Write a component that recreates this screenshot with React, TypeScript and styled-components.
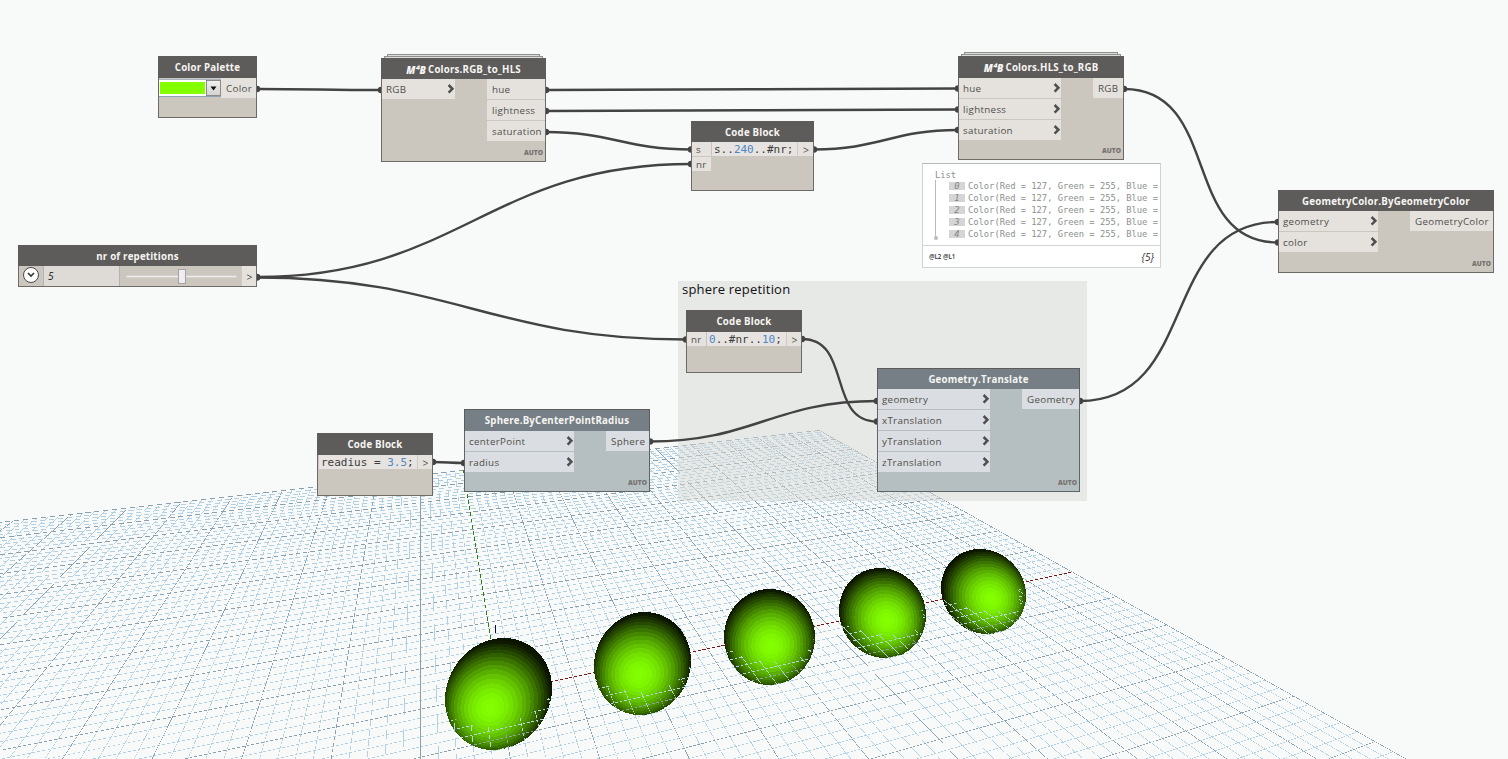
import React from "react";
import styled, { createGlobalStyle, css } from "styled-components";

const GlobalStyle = createGlobalStyle`
  * { box-sizing: border-box; }
  html, body { margin: 0; padding: 0; background: #f8faf9; }
  body { overflow: hidden; }
`;

/* ---------- 3D background geometry ---------- */

const W = 1508;
const H = 759;
const HORIZON = 207;
const ORIGIN = { x: 499.5, y: 692.55 };
const VX = 2806;
const VY = 420.5;
const KA = 0.03303;
const KB = 0.0844;
const LINE = 0.57;
const NEAR = 0.62;

type Pt = [number, number];
type Seg = [Pt, Pt];
type Bounds = { x0: number; x1: number; y0: number; y1: number };

const SCREEN: Bounds = { x0: 0, x1: W, y0: 0, y1: H };

/** Projects a ground plane point, in major grid cells, to the screen. */
function project(u: number, v: number): Pt {
  const w = 1 + KA * u + KB * v;
  return [
    (ORIGIN.x + KA * u * VX + KB * v * VY) / w,
    HORIZON + (ORIGIN.y - HORIZON) / w,
  ];
}

const f = (n: number) => n.toFixed(2);

/**
 * Thin lines drawn without smoothing: a pixel is set only when its centre
 * falls inside the line, so each line breaks up into short pixel runs.
 */
function runs([a, b]: Seg, width: number, box: Bounds): string {
  const dx = b[0] - a[0];
  const dy = b[1] - a[1];
  const flat = Math.abs(dx) >= Math.abs(dy);
  const len = Math.hypot(dx, dy);
  const half = (width * len) / (flat ? Math.abs(dx) : Math.abs(dy)) / 2;
  const m = flat ? 0 : 1;
  const o = 1 - m;
  const slope = (b[o] - a[o]) / (b[m] - a[m]);
  const lowM = flat ? box.x0 : box.y0;
  const highM = flat ? box.x1 : box.y1;
  const lowO = flat ? box.y0 : box.x0;
  const highO = flat ? box.y1 : box.x1;
  const start = Math.max(lowM, Math.round(Math.min(a[m], b[m])));
  const end = Math.min(highM, Math.round(Math.max(a[m], b[m])));
  let d = "";
  let from = -1;
  let row = 0;
  const flush = (to: number) => {
    if (from < 0) return;
    d += flat ? `M${from} ${row}.5h${to - from}` : `M${row}.5 ${from}v${to - from}`;
    from = -1;
  };
  for (let i = start; i < end; i++) {
    const c = a[o] + slope * (i + 0.5 - a[m]);
    const j = Math.floor(c);
    const on = Math.abs(j + 0.5 - c) <= half && j >= lowO && j < highO;
    if (!on) flush(i);
    else if (from < 0) {
      from = i;
      row = j;
    } else if (j !== row) {
      flush(i);
      from = i;
      row = j;
    }
  }
  flush(end);
  return d;
}

function gridSegments(major: boolean): Seg[] {
  const list: Seg[] = [];
  for (let i = -50; i <= 50; i++) {
    if ((i % 5 === 0) !== major) continue;
    const k = i / 5;
    const vMin = Math.max(-10, (NEAR - 1 - KA * k) / KB);
    list.push([project(k, vMin), project(k, k === 0 ? 0 : 10)]);
    const uMin = Math.max(-10, (NEAR - 1 - KB * k) / KA);
    if (uMin < 10) list.push([project(uMin, k), project(k === 0 ? 0 : 10, k)]);
  }
  return list;
}

const MINOR_SEGS = gridSegments(false);
const MAJOR_SEGS = gridSegments(true);
const raster = (segs: Seg[], box: Bounds, width = LINE) => segs.map((s) => runs(s, width, box)).join("");

const MINOR = raster(MINOR_SEGS, SCREEN);
const MAJOR = raster(MAJOR_SEGS, SCREEN);
const AXIS_Y = raster([[project(0, 0), project(0, 10)]], SCREEN, 0.62);
const AXIS_X = raster([[project(0, 0), project(10, 0)]], SCREEN, 0.62);

type Sphere = Bounds & { u: number; top: number; lx: number; ly: number };

const SPHERES: Sphere[] = [
  { u: 0, x0: 445, x1: 552, y0: 638, y1: 750, top: 5.5, lx: 490, ly: 708 },
  { u: 2, x0: 594, x1: 691, y0: 612, y1: 715, top: 2.5, lx: 639, ly: 675 },
  { u: 4, x0: 724, x1: 815, y0: 589, y1: 685, top: 0, lx: 771, ly: 646 },
  { u: 6, x0: 839, x1: 926, y0: 568, y1: 658, top: -2.5, lx: 887, ly: 621 },
  { u: 8, x0: 941, x1: 1026, y0: 549, y1: 634, top: -4, lx: 991, ly: 599 },
];

const BANDS = 19;
const CAP = 0.935;

const shade = (t: number) => `rgb(${Math.round(130 * t)},${Math.round(255 * t)},0)`;

function sphereShape(s: Sphere) {
  const cx = (s.x0 + s.x1) / 2;
  const cy = (s.y0 + s.y1) / 2;
  const A = (s.x1 - s.x0) / 2;
  const B = (s.y1 - s.y0) / 2;
  const m = (-s.top * B) / A;
  const D = Math.sqrt(B * B - m * m);
  const toScreen = (x: number, y: number): Pt => [cx + A * x, cy + m * x + D * y];
  const px = (s.lx - cx) / A;
  const py = (s.ly - cy - m * px) / D;
  const depth = (x: number, y: number) => Math.sqrt(Math.max(0, 1 - CAP * CAP * (x * x + y * y)));
  const pz = depth(px, py);
  const lit = (x: number, y: number) => CAP * CAP * (px * x + py * y) + pz * depth(x, y);
  const ring = (level: number) => {
    let d = "";
    for (let i = 0; i < 80; i++) {
      const a = (i / 80) * Math.PI * 2;
      const dx = Math.cos(a);
      const dy = Math.sin(a);
      const b = px * dx + py * dy;
      const edge = -b + Math.sqrt(b * b + 1 - px * px - py * py);
      let lo = 0;
      let hi = edge;
      if (lit(px + dx * edge, py + dy * edge) < level) {
        for (let k = 0; k < 18; k++) {
          const mid = (lo + hi) / 2;
          if (lit(px + dx * mid, py + dy * mid) >= level) lo = mid;
          else hi = mid;
        }
      }
      const p = toScreen(px + dx * hi, py + dy * hi);
      d += `${i ? "L" : "M"}${f(p[0])} ${f(p[1])}`;
    }
    return d + "Z";
  };
  const bands = [{ d: ring(-2), fill: "#0a1500" }];
  for (let i = 1; i < BANDS; i++) {
    const outer = Math.cos((Math.PI / 2) * (1 - i / BANDS));
    const inner = Math.cos((Math.PI / 2) * (1 - (i + 0.7) / BANDS));
    bands.push({ d: ring(outer), fill: shade(Math.max(0.08, Math.min(1, inner) ** 1.9)) });
  }
  /* Area of the ball below the ground plane, seen through the near edge of the cut. */
  let below = "";
  for (let i = 0; i <= 32; i++) {
    const a = Math.PI + (i / 32) * Math.PI;
    const p = project(s.u + 0.7 * Math.cos(a), 0.7 * Math.sin(a));
    if (i === 0) below += `M${f(p[0] - 4)} ${f(p[1])}`;
    below += `L${f(p[0])} ${f(p[1])}`;
    if (i === 32) below += `L${f(p[0] + 4)} ${f(p[1])}V${H}H${s.x0 - 4}Z`;
  }
  return {
    bands,
    outline: bands[0].d,
    below,
    minor: raster(MINOR_SEGS, s),
    major: raster(MAJOR_SEGS, s),
  };
}

const SHAPES = SPHERES.map(sphereShape);

const WIRES: [number, number, number, number][] = [
  [257, 89, 381, 90],
  [546, 90, 958, 88.5],
  [546, 111, 958, 109.5],
  [546, 132, 691, 149.5],
  [814, 149.5, 958, 130],
  [257, 277, 691, 164],
  [257, 277.5, 686, 339.5],
  [802, 339, 877, 421.5],
  [650, 441.5, 877, 401],
  [433, 462, 464, 463],
  [1080, 401, 1278, 222],
  [1124, 89, 1278, 242.5],
];

function wirePath([x1, y1, x2, y2]: [number, number, number, number]) {
  const off = 0.45 * Math.hypot(x2 - x1, y2 - y1);
  return `M${x1} ${y1}C${x1 + off} ${y1} ${x2 - off} ${y2} ${x2} ${y2}`;
}

/* ---------- styled parts ---------- */

const Workspace = styled.main`
  position: relative;
  width: ${W}px;
  height: ${H}px;
  overflow: hidden;
  background: #f8faf9;
  font-family: "Open Sans", "Liberation Sans", sans-serif;
`;

const Layer = styled.svg`
  position: absolute;
  inset: 0;
  display: block;
`;

type Tone = "warm" | "cool";
const tones = {
  warm: { head: "#5e5c5a", body: "#cbc6be", port: "#e5e2de", line: "#6e6b67" },
  cool: { head: "#757f85", body: "#b5bfc1", port: "#dadde1", line: "#5f6466" },
};

type Box = { $x: number; $y: number; $w: number; $h: number };

const placed = css<Box>`
  position: absolute;
  left: ${(p) => p.$x}px;
  top: ${(p) => p.$y}px;
  width: ${(p) => p.$w}px;
  height: ${(p) => p.$h}px;
`;

const Group = styled.section<Box>`
  ${placed}
  padding: 0 4px;
  background: rgba(214, 215, 214, 0.5);
  color: #111;
  font-size: 13px;
  line-height: 17px;
  letter-spacing: 0.2px;
`;

const NodeBox = styled.article<Box & { $tone: Tone }>`
  ${placed}
  display: flex;
  flex-direction: column;
  border: 1px solid ${(p) => tones[p.$tone].line};
  background: ${(p) => tones[p.$tone].body};
`;

const StackSheet = styled.div<Box>`
  ${placed}
  border: 1px solid #8f8f8d;
  background: #dcdcda;
`;

const NodeHeader = styled.header<{ $tone: Tone; $h?: number }>`
  flex: none;
  display: flex;
  align-items: center;
  justify-content: center;
  gap: 2px;
  height: ${(p) => p.$h ?? 21}px;
  margin: -1px -1px 0;
  padding-top: 1px;
  border: 1px solid #5e5c5a;
  border-bottom: 0;
  background: ${(p) => tones[p.$tone].head};
  color: #f6f5f3;
  font-size: 9.7px;
  font-weight: 700;
  letter-spacing: 0.2px;
  line-height: 14px;
  white-space: nowrap;
`;

const PackMark = styled.span`
  font-size: 10px;
  font-style: italic;
  font-weight: 800;
  letter-spacing: 0.1px;
`;

const NodeBody = styled.div`
  flex: 1;
  display: flex;
  justify-content: space-between;
  align-items: flex-start;
  min-height: 0;
`;

const PortColumn = styled.div<{ $w: number }>`
  display: flex;
  flex-direction: column;
  gap: 1px;
  width: ${(p) => p.$w}px;
`;

const Port = styled.div<{ $tone: Tone; $h?: number; $out?: boolean }>`
  display: flex;
  align-items: center;
  justify-content: ${(p) => (p.$out ? "flex-start" : "space-between")};
  height: ${(p) => p.$h ?? 20}px;
  padding: 1px 0 0 ${(p) => (p.$out ? 5 : 4)}px;
  background: ${(p) => tones[p.$tone].port};
  color: #4f4d4b;
  font-size: 9.8px;
  letter-spacing: 0.3px;
  line-height: 15px;
  white-space: nowrap;
`;

const AutoTag = styled.footer`
  flex: none;
  height: 15px;
  padding-right: 2px;
  color: #77726f;
  font-size: 6.6px;
  font-weight: 800;
  line-height: 13px;
  text-align: right;
`;

const Code = styled.code<{ $w: number }>`
  width: ${(p) => p.$w}px;
  height: 14px;
  padding-left: 2px;
  border-left: 1px solid #c6c2cc;
  background: #e6e3e0;
  color: #3e3c3b;
  font-family: "DejaVu Sans Mono", "Liberation Mono", monospace;
  font-size: 11px;
  line-height: 15px;
  white-space: pre;
`;

const Num = styled.span`
  color: #4f86c6;
`;

const OutMark = styled.span<{ $w: number; $h?: number }>`
  width: ${(p) => p.$w}px;
  height: ${(p) => p.$h ?? 14}px;
  padding: 1px 0 0 1px;
  border-left: 1px solid #cfcac4;
  background: #e5e2de;
  color: #4f4d4b;
  font-size: 10.5px;
  line-height: ${(p) => p.$h ?? 14}px;
  text-align: center;
`;

const PaletteField = styled.div`
  display: flex;
  width: 62px;
  height: 18px;
  margin-top: 1px;
  border-top: 1px solid #a9b6c2;
  border-bottom: 1px solid #8fa3b8;
  background: #fff;
`;

const Swatch = styled.div`
  width: 45px;
  height: 12px;
  margin: 2px 1px;
  background: #84ff00;
`;

const DropButton = styled.div`
  display: flex;
  align-items: center;
  justify-content: center;
  width: 15px;
  border: 1px solid #8b8b8b;
  background: linear-gradient(#f0f0f0, #d2d2d2);
`;

const RoundButton = styled.div`
  display: flex;
  align-items: center;
  justify-content: center;
  width: 16px;
  height: 16px;
  margin: 1px 4px 0;
  border: 1px solid #4a4847;
  border-radius: 50%;
  background: #fff;
`;

const SliderValue = styled.div`
  width: 77px;
  height: 20px;
  padding-left: 4px;
  border: solid #b4b1b8;
  border-width: 0 1px;
  background: #dedbd7;
  color: #111;
  font-size: 10px;
  font-style: italic;
  line-height: 21px;
`;

const SliderTrack = styled.div`
  display: flex;
  align-items: center;
  justify-content: center;
  width: 111px;
  height: 3px;
  margin: 9px 4px 0 6px;
  border: 1px solid #d5d2ce;
  background: #ececea;
`;

const SliderThumb = styled.div`
  flex: none;
  width: 8px;
  height: 15px;
  border: 1px solid #a5a2a6;
  background: #efedf0;
`;

const Preview = styled.aside<Box>`
  ${placed}
  display: flex;
  flex-direction: column;
  border: 1px solid #d2d4d3;
  border-top-color: #b4bab7;
  background: #fff;
  font-family: "DejaVu Sans Mono", "Liberation Mono", monospace;
  font-size: 8.8px;
  letter-spacing: -0.02px;
  color: #8b918f;
`;

const PreviewList = styled.div`
  flex: 1;
  display: flex;
  flex-direction: column;
  padding: 6px 0 0 12px;
  overflow: hidden;
`;

const ListTitle = styled.div`
  height: 10px;
  line-height: 11px;
`;

const ListRows = styled.div`
  display: flex;
  flex-direction: column;
  flex: none;
  width: 225px;
  height: 58px;
  padding-left: 13px;
  border-left: 1px solid #b9bdbb;
`;

const ListRow = styled.div`
  flex: none;
  display: flex;
  align-items: center;
  gap: 3px;
  height: 12px;
  white-space: pre;
`;

const IndexTag = styled.span`
  width: 16px;
  height: 8px;
  background: #d5d5d5;
  color: #858585;
  font-style: italic;
  line-height: 9px;
  text-align: center;
`;

const ListEnd = styled.i`
  flex: none;
  width: 4px;
  height: 4px;
  margin: -2px 0 0 -1.5px;
  border-radius: 50%;
  background: #b9bdbb;
`;

const PreviewFooter = styled.div`
  flex: none;
  display: flex;
  align-items: center;
  justify-content: space-between;
  height: 22px;
  padding: 0 6px;
  border-top: 1px solid #d2d4d3;
  color: #2c3134;
  font-family: "Open Sans", sans-serif;
  font-size: 6.2px;
  font-weight: 600;
`;

const Count = styled.em`
  color: #2c2c2c;
  font-size: 10px;
  font-weight: 400;
`;

/* ---------- node components ---------- */

const Chevron = () => (
  <svg width="8" height="12" viewBox="0 0 8 12">
    <path d="M1.6 1L5.4 4.8L1.6 8.6" fill="none" stroke="#4f4d4f" strokeWidth="2.5" />
  </svg>
);

type FnProps = {
  x: number; y: number; w: number; h: number;
  head?: number;
  tone?: Tone;
  title: string;
  pack?: boolean;
  inputs: string[];
  inW: number;
  outputs: string[];
  outW: number;
};

const FunctionNode = ({ x, y, w, h, head, tone = "warm", title, pack, inputs, inW, outputs, outW }: FnProps) => (
  <>
    {pack && <StackSheet $x={x + 6} $y={y - 4} $w={w - 12} $h={5} />}
    {pack && <StackSheet $x={x + 3} $y={y - 2} $w={w - 6} $h={4} />}
    <NodeBox $x={x} $y={y} $w={w} $h={h} $tone={tone}>
      <NodeHeader $tone={tone} $h={head}>
        {pack && <PackMark>M⁴B</PackMark>}
        {title}
      </NodeHeader>
      <NodeBody>
        <PortColumn $w={inW}>
          {inputs.map((name) => (
            <Port key={name} $tone={tone}>{name}<Chevron /></Port>
          ))}
        </PortColumn>
        <PortColumn $w={outW}>
          {outputs.map((name) => (
            <Port key={name} $tone={tone} $out>{name}</Port>
          ))}
        </PortColumn>
      </NodeBody>
      <AutoTag>AUTO</AutoTag>
    </NodeBox>
  </>
);

type CodeProps = {
  x: number; y: number; w: number; h: number;
  head?: number;
  inputs?: string[];
  inW?: number;
  codeW: number;
  outW: number;
  children: React.ReactNode;
};

const CodeNode = ({ x, y, w, h, head, inputs, inW = 0, codeW, outW, children }: CodeProps) => (
  <NodeBox $x={x} $y={y} $w={w} $h={h} $tone="warm">
    <NodeHeader $tone="warm" $h={head}>Code Block</NodeHeader>
    <NodeBody>
      {inputs && (
        <PortColumn $w={inW}>
          {inputs.map((name) => (
            <Port key={name} $tone="warm" $h={14}>{name}</Port>
          ))}
        </PortColumn>
      )}
      <Code $w={codeW}>{children}</Code>
      <OutMark $w={outW}>&gt;</OutMark>
    </NodeBody>
  </NodeBox>
);

const Scene = () => (
  <Layer width={W} height={H} viewBox={`0 0 ${W} ${H}`} shapeRendering="crispEdges" fill="none">
    <defs>
      {SHAPES.map((s, i) => (
        <React.Fragment key={i}>
          <clipPath id={`ball${i}`}><path d={s.outline} /></clipPath>
          <clipPath id={`below${i}`}><path d={s.below} /></clipPath>
        </React.Fragment>
      ))}
    </defs>
    <path d={MINOR} stroke="#b3d0e2" />
    <path d={MAJOR} stroke="#8aa0af" />
    <path d={AXIS_Y} stroke="#2f7d0c" />
    <path d={AXIS_X} stroke="#7d1414" />
    <path d="M495.5 625V633" stroke="#111" />
    {SHAPES.map((s, i) => (
      <g key={i}>
        {s.bands.map((b, k) => <path key={k} d={b.d} fill={b.fill} />)}
        <g clipPath={`url(#ball${i})`}>
          <g clipPath={`url(#below${i})`}>
            <path d={s.minor} stroke="#b3d8dc" />
            <path d={s.major} stroke="#8aa49a" />
          </g>
        </g>
      </g>
    ))}
  </Layer>
);

const Wires = () => (
  <Layer width={W} height={H} viewBox={`0 0 ${W} ${H}`} fill="none">
    {WIRES.map((w, i) => (
      <g key={i}>
        <path d={wirePath(w)} stroke="#434343" strokeWidth="2.4" />
        <circle cx={w[0]} cy={w[1]} r="3.2" fill="#434343" />
        <circle cx={w[2]} cy={w[3]} r="3.2" fill="#434343" />
      </g>
    ))}
  </Layer>
);

export default function App() {
  return (
    <Workspace>
      <GlobalStyle />
      <Scene />
      <Group $x={678} $y={281} $w={409} $h={220}>sphere repetition</Group>
      <Wires />

      <NodeBox $x={158} $y={56} $w={99} $h={62} $tone="warm">
        <NodeHeader $tone="warm" $h={22}>Color Palette</NodeHeader>
        <NodeBody>
          <PaletteField>
            <Swatch />
            <DropButton>
              <svg width="7" height="5" viewBox="0 0 7 5"><path d="M0.5 0.5H6.5L3.5 4.5Z" fill="#111" /></svg>
            </DropButton>
          </PaletteField>
          <PortColumn $w={35}><Port $tone="warm" $out>Color</Port></PortColumn>
        </NodeBody>
      </NodeBox>

      <NodeBox $x={18} $y={245} $w={239} $h={42} $tone="warm">
        <NodeHeader $tone="warm" $h={21}>nr of repetitions</NodeHeader>
        <NodeBody>
          <RoundButton>
            <svg width="8" height="6" viewBox="0 0 8 6"><path d="M1 1L4 4L7 1" fill="none" stroke="#333" strokeWidth="1.6" /></svg>
          </RoundButton>
          <SliderValue>5</SliderValue>
          <SliderTrack><SliderThumb /></SliderTrack>
          <OutMark $w={15} $h={20}>&gt;</OutMark>
        </NodeBody>
      </NodeBox>

      <FunctionNode x={381} y={58} w={165} h={104} title="Colors.RGB_to_HLS" pack
        inputs={["RGB"]} inW={73} outputs={["hue", "lightness", "saturation"]} outW={58} />

      <CodeNode x={691} y={121} w={123} h={70} inputs={["s", "nr"]} inW={19} codeW={86} outW={16}>
        s..<Num>240</Num>..#nr;
      </CodeNode>

      <FunctionNode x={958} y={56} w={166} h={104} head={22} title="Colors.HLS_to_RGB" pack
        inputs={["hue", "lightness", "saturation"]} inW={102} outputs={["RGB"]} outW={30} />

      <Preview $x={922} $y={163} $w={239} $h={105}>
        <PreviewList>
          <ListTitle>List</ListTitle>
          <ListRows>
            {[0, 1, 2, 3, 4].map((n) => (
              <ListRow key={n}><IndexTag>{n}</IndexTag>Color(Red = 127, Green = 255, Blue =</ListRow>
            ))}
          </ListRows>
          <ListEnd />
        </PreviewList>
        <PreviewFooter><span>@L2 @L1</span><Count>{"{5}"}</Count></PreviewFooter>
      </Preview>

      <FunctionNode x={1278} y={190} w={216} h={83} title="GeometryColor.ByGeometryColor"
        inputs={["geometry", "color"]} inW={99} outputs={["GeometryColor"]} outW={83} />

      <CodeNode x={686} y={310} w={116} h={63} head={22} inputs={["nr"]} inW={19} codeW={80} outW={15}>
        <Num>0</Num>..#nr..<Num>10</Num>;
      </CodeNode>

      <FunctionNode x={877} y={368} w={203} h={124} tone="cool" title="Geometry.Translate"
        inputs={["geometry", "xTranslation", "yTranslation", "zTranslation"]} inW={112} outputs={["Geometry"]} outW={57} />

      <FunctionNode x={464} y={409} w={186} h={83} head={22} tone="cool" title="Sphere.ByCenterPointRadius"
        inputs={["centerPoint", "radius"]} inW={109} outputs={["Sphere"]} outW={43} />

      <CodeNode x={317} y={433} w={116} h={63} head={22} codeW={99} outW={15}>
        readius = <Num>3.5</Num>;
      </CodeNode>
    </Workspace>
  );
}
